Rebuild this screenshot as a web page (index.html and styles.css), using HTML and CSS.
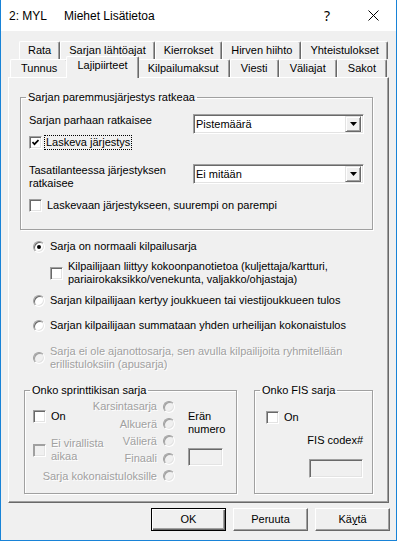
FILE: index.html
```html
<!DOCTYPE html>
<html lang="fi">
<head>
  <meta charset="UTF-8" />
  <title>Miehet Lisätietoa</title>
  <link rel="stylesheet" href="styles.css">
</head>
<body>

<div class="window">
  <div class="titlebar">
    <span class="title-code">2: MYL</span>
    <span class="title-text">Miehet Lisätietoa</span>
    <span class="title-btn help">?</span>
    <span class="title-btn close">
      <svg width="11" height="11" viewBox="0 0 11 11"><path d="M0.5 0.5 L10.5 10.5 M10.5 0.5 L0.5 10.5" stroke="#000" stroke-width="1" fill="none"/></svg>
    </span>
  </div>

  <div class="dialog">
    <div class="tabs">
      <div class="tab-row back">
        <div class="tab">Rata</div>
        <div class="tab">Sarjan lähtöajat</div>
        <div class="tab">Kierrokset</div>
        <div class="tab">Hirven hiihto</div>
        <div class="tab">Yhteistulokset</div>
      </div>
      <div class="tab-row front">
        <div class="tab">Tunnus</div>
        <div class="tab selected">Lajipiirteet</div>
        <div class="tab">Kilpailumaksut</div>
        <div class="tab">Viesti</div>
        <div class="tab">Väliajat</div>
        <div class="tab">Sakot</div>
      </div>
    </div>

    <div class="panel">
      <fieldset class="group order">
        <legend>Sarjan paremmusjärjestys ratkeaa</legend>
        <div class="field-row">
          <span>Sarjan parhaan ratkaisee</span>
          <div class="combo">
            <span class="combo-value">Pistemäärä</span>
            <span class="combo-btn"><svg width="7" height="4" viewBox="0 0 7 4"><path d="M0 0 H7 L3.5 4 Z" fill="#000"/></svg></span>
          </div>
        </div>
        <div class="check focused">
          <span class="box"><svg width="7" height="7" viewBox="0 0 7 7"><path d="M0.5 3 L2.5 5.2 L6.5 1" stroke="#000" stroke-width="1.7" fill="none"/></svg></span>
          <span class="focus">Laskeva järjestys</span>
        </div>
        <div class="field-row second">
          <span>Tasatilanteessa järjestyksen<br>ratkaisee</span>
          <div class="combo">
            <span class="combo-value">Ei mitään</span>
            <span class="combo-btn"><svg width="7" height="4" viewBox="0 0 7 4"><path d="M0 0 H7 L3.5 4 Z" fill="#000"/></svg></span>
          </div>
        </div>
        <div class="check last">
          <span class="box"></span>
          <span>Laskevaan järjestykseen, suurempi on parempi</span>
        </div>
      </fieldset>

      <div class="options">
        <div class="option first"><span class="radio on"></span><span>Sarja on normaali kilpailusarja</span></div>
        <div class="option sub"><span class="box"></span><span>Kilpailijaan liittyy kokoonpanotietoa (kuljettaja/kartturi,<br>pariairokaksikko/venekunta, valjakko/ohjastaja)</span></div>
        <div class="option team"><span class="radio"></span><span>Sarjan kilpailijaan kertyy joukkueen tai viestijoukkueen tulos</span></div>
        <div class="option sum"><span class="radio"></span><span>Sarjan kilpailijaan summataan yhden urheilijan kokonaistulos</span></div>
        <div class="option aux disabled"><span class="radio"></span><span>Sarja ei ole ajanottosarja, sen avulla kilpailijoita ryhmitellään<br>erillistuloksiin (apusarja)</span></div>
      </div>

      <div class="lower">
        <fieldset class="group sprint">
          <legend>Onko sprinttikisan sarja</legend>
          <div class="sprint-body">
            <div class="heats">
              <div class="check sprint-on"><span class="box"></span><span>On</span></div>
              <div class="check unofficial disabled"><span class="box"></span><span>Ei virallista<br>aikaa</span></div>
              <div class="heat disabled">Karsintasarja <span class="radio"></span></div>
              <div class="heat disabled">Alkuerä <span class="radio"></span></div>
              <div class="heat disabled">Välierä <span class="radio"></span></div>
              <div class="heat disabled">Finaali <span class="radio"></span></div>
              <div class="heat total disabled">Sarja kokonaistuloksille <span class="radio"></span></div>
            </div>
            <div class="heat-no">
              <span>Erän<br>numero</span>
              <span class="textbox heat-box"></span>
            </div>
          </div>
        </fieldset>

        <fieldset class="group fis">
          <legend>Onko FIS sarja</legend>
          <div class="check fis-on"><span class="box"></span><span>On</span></div>
          <span class="fis-label">FIS codex#</span>
          <span class="textbox fis-box"></span>
        </fieldset>
      </div>
    </div>

    <div class="buttons">
      <button class="btn default">OK</button>
      <button class="btn">Peruuta</button>
      <button class="btn">Kä<u>y</u>tä</button>
    </div>
  </div>
</div>

</body>
</html>
```

FILE: styles.css
```css
* {
  box-sizing: border-box;
}

html, body {
  margin: 0;
  padding: 0;
  background: #fff;
}

body {
  font-family: "Liberation Sans", Arial, sans-serif;
  font-size: 11px;
  line-height: 13px;
  color: #000;
}

.window {
  width: 397px;
  height: 541px;
  background: #f0f0f0;
  border: 1px solid #1883d7;
  border-top: none;
}

/* title bar */
.titlebar {
  height: 31px;
  background: #fff;
  display: flex;
  align-items: center;
  font-size: 12px;
  line-height: 16px;
}

.title-code {
  margin-left: 8px;
  width: 55px;
}

.title-text {
  flex: 1;
}

.title-btn {
  width: 46px;
  height: 31px;
  display: flex;
  align-items: center;
  justify-content: center;
}

.help {
  font-family: "Noto Sans", sans-serif;
  font-size: 14px;
}

/* dialog body */
.dialog {
  padding: 10px 7px 0 7px;
}

.tab-row {
  display: flex;
  height: 18px;
}

.tab-row.back {
  padding: 0 2px 0 11px;
}

.tab-row.front {
  padding: 0 2px;
}

.tab {
  flex: 1 0 auto;
  height: 18px;
  padding: 0 8px;
  text-align: center;
  line-height: 17px;
  white-space: nowrap;
  background: #f0f0f0;
  border-top: 1px solid #fff;
  border-left: 1px solid #fff;
  border-right: 1px solid #696969;
  border-radius: 2px 2px 0 0;
  box-shadow: inset -1px 0 0 #a0a0a0;
}

.tab.selected {
  height: 22px;
  margin: -3px -2px -1px;
  position: relative;
  z-index: 1;
}

.panel {
  height: 426px;
  border: 1px solid;
  border-color: #fff #696969 #696969 #fff;
  box-shadow: inset -1px -1px 0 #a0a0a0;
  padding: 13px 15px 0 11px;
}

/* group boxes */
.group {
  margin: 0;
  min-width: 0;
  border: 1px solid #a0a0a0;
  box-shadow: inset 1px 1px 0 #fff, 1px 1px 0 #fff;
}

.group legend {
  padding: 0 2px;
  margin-left: -3px;
  line-height: 13px;
}

.order {
  padding: 10px 8px 17px;
}

.field-row {
  display: flex;
  justify-content: space-between;
  align-items: flex-start;
}

.field-row.second {
  margin-top: 15px;
}

.combo {
  width: 171px;
  height: 20px;
  background: #fff;
  border: 1px solid;
  border-color: #a0a0a0 #fff #fff #a0a0a0;
  box-shadow: inset 1px 1px 0 #696969, inset -1px -1px 0 #e3e3e3;
  display: flex;
  align-items: center;
  padding: 2px;
}

.combo-value {
  flex: 1;
}

.combo-btn {
  width: 16px;
  height: 16px;
  background: #f0f0f0;
  border: 1px solid;
  border-color: #e3e3e3 #696969 #696969 #e3e3e3;
  box-shadow: inset 1px 1px 0 #fff, inset -1px -1px 0 #a0a0a0;
  display: flex;
  align-items: center;
  justify-content: center;
}

/* checkboxes and radios */
.check {
  display: flex;
  align-items: center;
  gap: 5px;
  white-space: nowrap;
}

.check.focused {
  margin-top: 2px;
  gap: 3px;
}

.focus {
  outline: 1px dotted #000;
  padding: 0 1px;
}

.check.last {
  margin-top: 9px;
}

.box {
  width: 13px;
  height: 13px;
  flex: none;
  background: #fff;
  border: 1px solid;
  border-color: #a0a0a0 #fff #fff #a0a0a0;
  box-shadow: inset 1px 1px 0 #696969, inset -1px -1px 0 #e3e3e3;
  display: flex;
  align-items: center;
  justify-content: center;
}

.radio {
  width: 12px;
  height: 12px;
  flex: none;
  border-radius: 50%;
  background: #fff;
  border: 1px solid;
  border-color: #a0a0a0 #fff #fff #a0a0a0;
  box-shadow: inset 1px 1px 0 #696969, inset -1px -1px 0 #e3e3e3;
  display: flex;
  align-items: center;
  justify-content: center;
}

.radio.on::after {
  content: "";
  width: 4px;
  height: 4px;
  border-radius: 50%;
  background: #000;
}

.disabled {
  color: #a0a0a0;
  text-shadow: 1px 1px 0 #fff;
}

.disabled .box,
.disabled .radio {
  background: #f0f0f0;
  box-shadow: inset 1px 1px 0 #a0a0a0, inset -1px -1px 0 #e3e3e3;
}

/* radio options */
.options {
  padding-left: 13px;
  margin-top: 10px;
}

.option {
  display: flex;
  align-items: center;
  gap: 5px;
  white-space: nowrap;
}

.option.sub {
  margin: 7px 0 0 17px;
}

.option.team {
  margin-top: 8px;
}

.option.sum {
  margin-top: 12px;
}

.option.aux {
  margin-top: 13px;
}

/* lower groups */
.lower {
  display: flex;
  gap: 17px;
  margin: 13px 0 0 4px;
}

.sprint {
  width: 213px;
  padding: 1px 8px 8px;
}

.sprint-body {
  display: flex;
}

.heats {
  display: grid;
  grid-template-columns: 64px 78px;
  grid-template-rows: repeat(5, 17.4px);
}

.sprint-on {
  grid-column: 1;
  grid-row: 1 / 3;
  padding-top: 2px;
}

.unofficial {
  grid-column: 1;
  grid-row: 3 / 5;
}

.heat {
  display: flex;
  align-items: center;
  justify-content: flex-end;
  gap: 6px;
  white-space: nowrap;
}

.heat.total {
  grid-column: 1 / 3;
  grid-row: 5;
}

.heat-no {
  display: flex;
  flex-direction: column;
  align-items: flex-start;
  margin-left: 13px;
  padding-top: 12px;
}

.textbox {
  display: block;
  background: #f0f0f0;
  border: 1px solid;
  border-color: #a0a0a0 #fff #fff #a0a0a0;
  box-shadow: inset 1px 1px 0 #696969, inset -1px -1px 0 #e3e3e3;
}

.heat-box {
  width: 35px;
  height: 18px;
  margin-top: 12px;
}

.fis {
  width: 119px;
  padding: 1px 9px 8px 8px;
  display: flex;
  flex-direction: column;
}

.fis-on {
  margin: 13px 0 0 3px;
}

.fis-label {
  align-self: flex-end;
  margin-top: 10px;
}

.fis-box {
  align-self: flex-end;
  width: 54px;
  height: 19px;
  margin-top: 12px;
}

/* buttons */
.buttons {
  display: flex;
  justify-content: flex-end;
  gap: 7px;
  margin: 5px -1px 0 0;
}

.btn {
  width: 75px;
  height: 23px;
  padding: 0;
  font: inherit;
  color: #000;
  background: #f0f0f0;
  border: 1px solid;
  border-color: #fff #696969 #696969 #fff;
  box-shadow: inset -1px -1px 0 #a0a0a0;
}

.btn.default {
  border-color: #000;
  box-shadow: inset 1px 1px 0 #fff, inset -1px -1px 0 #696969, inset -2px -2px 0 #a0a0a0;
}
```
